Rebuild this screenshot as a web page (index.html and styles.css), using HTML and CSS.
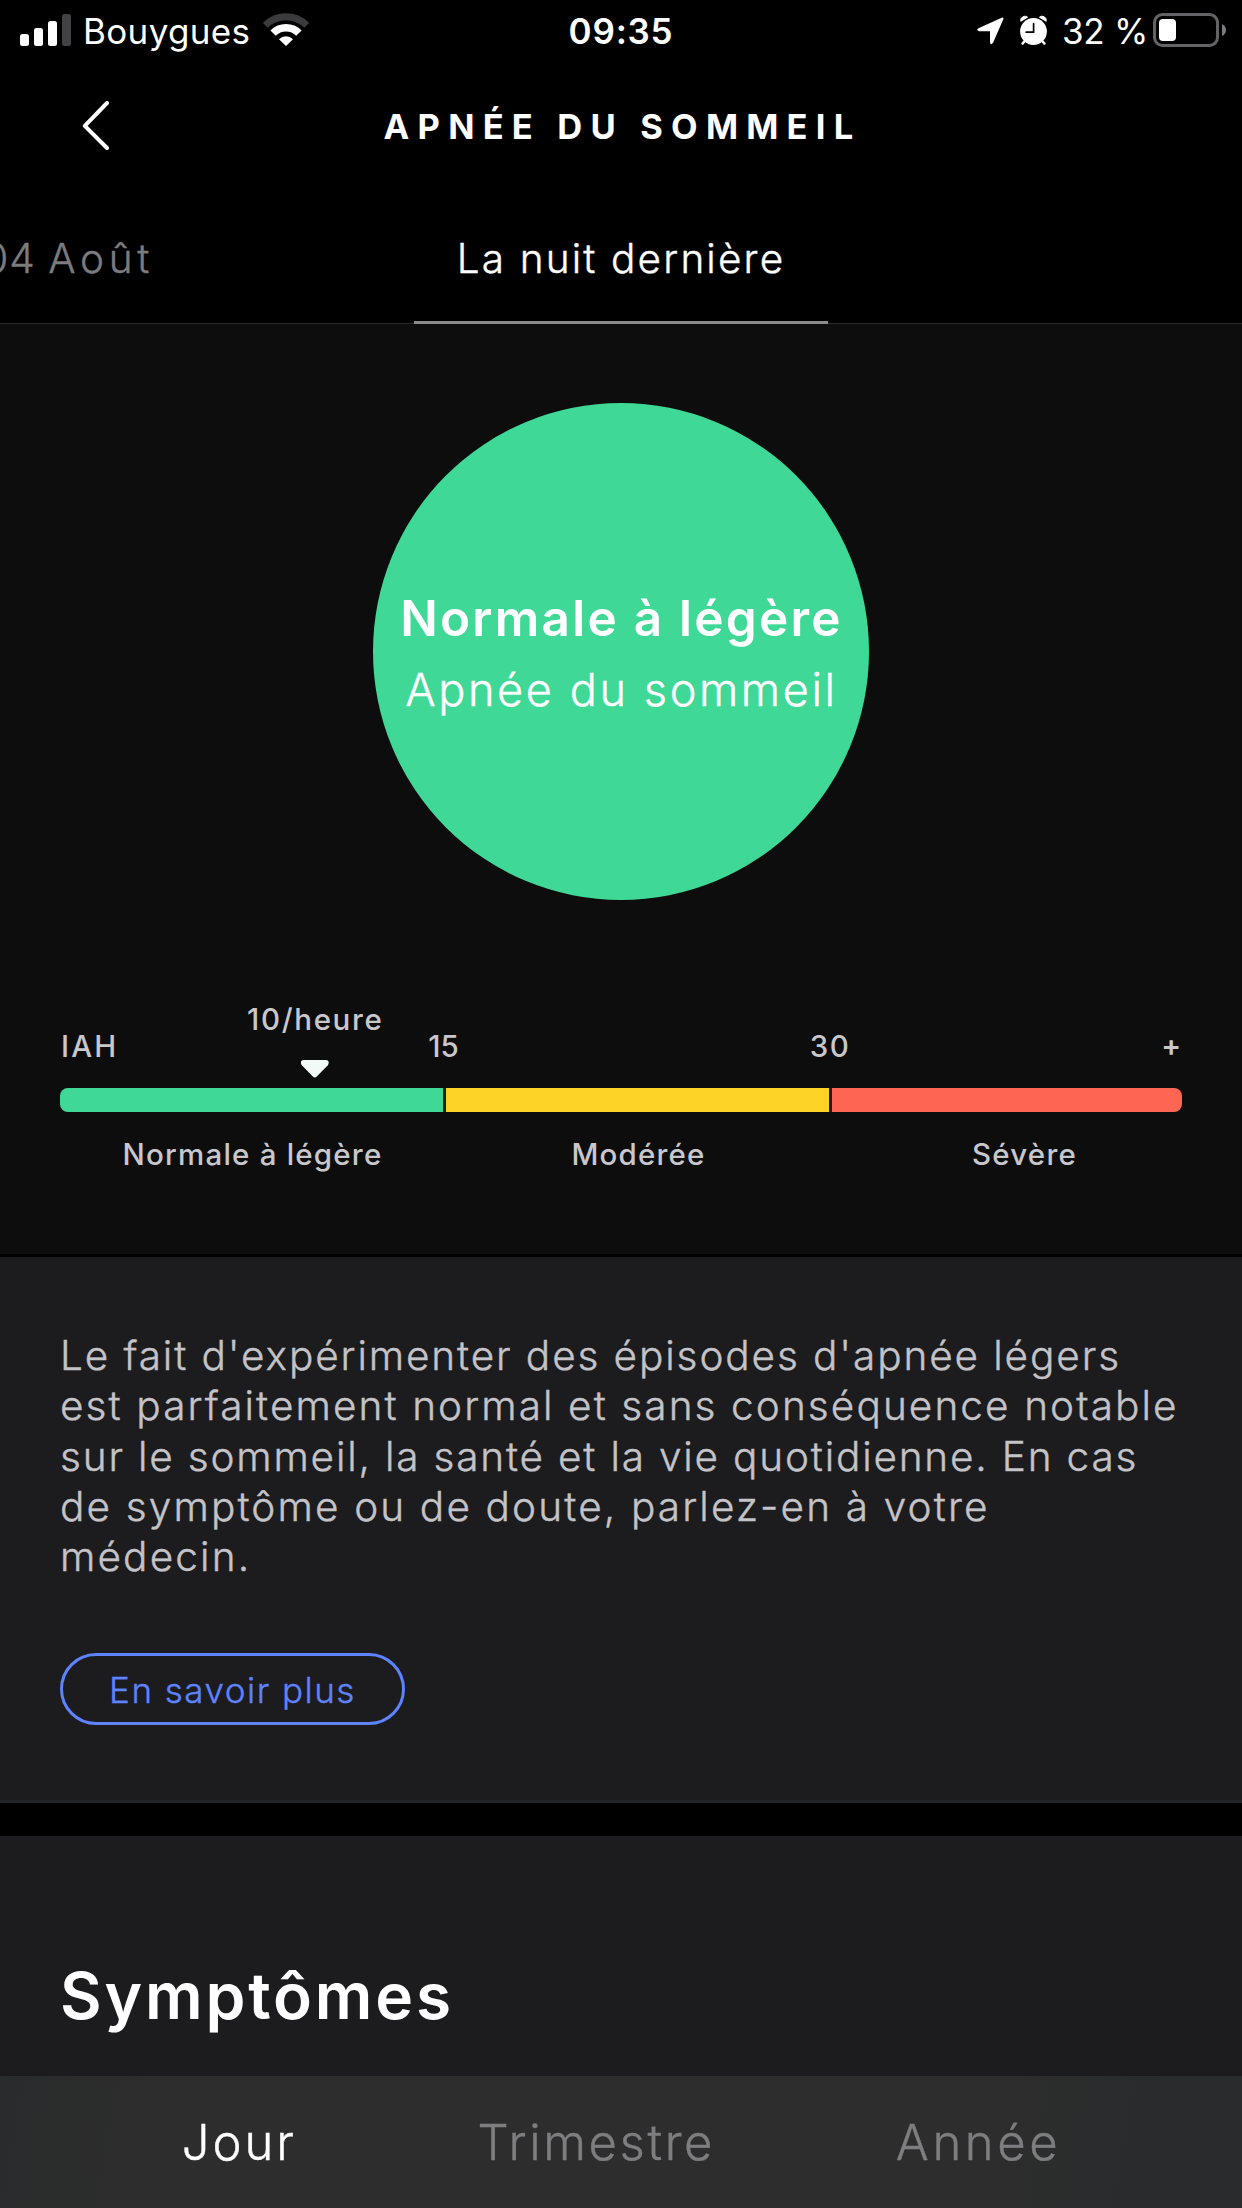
FILE: index.html
```html
<!DOCTYPE html>
<html lang="fr">
<head>
<meta charset="utf-8">
<title>Apnée du sommeil</title>
<link rel="stylesheet" href="styles.css">
</head>
<body>
<div class="screen">
  <div class="status">
    <div class="status-left">
      <svg width="51" height="62" viewBox="20 0 51 62">
        <g fill="#fff">
          <rect x="20" y="34" width="9" height="12" rx="2.5"/>
          <rect x="34" y="28" width="9" height="18" rx="2.5"/>
          <rect x="48" y="21" width="9" height="25" rx="2.5"/>
        </g>
        <rect x="62" y="14" width="9" height="32" rx="2.5" fill="#424244"/>
      </svg>
      <span class="carrier">Bouygues</span>
      <svg width="46" height="62" viewBox="263 0 46 62">
        <path d="M265.3 25.3A29.3 29.3 0 0 1 306.7 25.3" fill="none" stroke="#3b3b3d" stroke-width="6.8"/>
        <path d="M273.1 33.1A18.2 18.2 0 0 1 298.9 33.1" fill="none" stroke="#fff" stroke-width="7.6"/>
        <path d="M286 46L279 39.2A10 10 0 0 1 293 39.2Z" fill="#fff"/>
      </svg>
    </div>
    <span class="clock">09:35</span>
    <div class="status-right">
      <svg width="27" height="62" viewBox="977 0 27 62">
        <path d="M978.5 28.2L1001.7 17.8Q1004 17 1003.3 19.3L993.2 42.6Q990.6 45.8 990 42.4V31.2H979Q975.7 30 978.5 28.2Z" fill="#fff"/>
      </svg>
      <svg width="27" height="62" viewBox="1020 0 27 62" class="alarm">
        <circle cx="1033.5" cy="31.5" r="13.4" fill="#fff"/>
        <path d="M1020.8 21.3A4.2 4.2 0 0 1 1027.6 17.2ZM1046.2 21.3A4.2 4.2 0 0 0 1039.4 17.2Z" fill="#fff" stroke="#fff" stroke-width="1" stroke-linejoin="round"/>
        <path d="M1024.8 41L1022.5 43.6M1042.2 41L1044.5 43.6" stroke="#fff" stroke-width="2.4" stroke-linecap="round"/>
        <path d="M1033.6 23.5V32.2H1026.2" fill="none" stroke="#000" stroke-width="1.7" stroke-linecap="round"/>
      </svg>
      <span class="charge">32 %</span>
      <svg width="73" height="62" viewBox="1153 0 73 62">
        <rect x="1154.5" y="14.5" width="63" height="31" rx="8" fill="none" stroke="#636365" stroke-width="3"/>
        <rect x="1159" y="19" width="17" height="22" rx="4" fill="#fff"/>
        <path d="M1222 24Q1226 26 1226 30T1222 36Z" fill="#7c7c7e"/>
      </svg>
    </div>
  </div>

  <header class="header">
    <svg class="back" width="30" height="52" viewBox="0 0 30 52">
      <path d="M27 2L4.8 24.8L27 47" fill="none" stroke="#fff" stroke-width="4" stroke-linecap="round" stroke-linejoin="round"/>
    </svg>
    <h1 class="title">APNÉE DU SOMMEIL</h1>
  </header>

  <nav class="days">
    <span class="day"><span class="date">04 </span><span class="month">Août</span></span>
    <span class="day day-active">La nuit dernière</span>
  </nav>

  <main class="content">
    <section class="result">
      <div class="disc">
        <strong class="level">Normale à légère</strong>
        <span class="metric">Apnée du sommeil</span>
      </div>
      <div class="gauge">
        <div class="value" style="left: 255.3px">
          <span>10/heure</span>
          <svg width="28" height="18" viewBox="0 0 28 18"><path d="M3 0H25Q28 0 28 2.5Q28 4 27 5.2L16 16.6Q14 18.6 12 16.6L1 5.2Q0 4 0 2.5Q0 0 3 0Z" fill="#f2faf7"/></svg>
        </div>
        <div class="ticks">
          <span class="unit">IAH</span>
          <span class="tick" style="left: 383.5px">15</span>
          <span class="tick tick-30" style="left: 770px">30</span>
          <span class="plus">+</span>
        </div>
        <div class="bar">
          <i class="seg seg-ok"></i><i class="seg seg-mid"></i><i class="seg seg-high"></i>
        </div>
        <div class="zones">
          <span>Normale à légère</span><span>Modérée</span><span>Sévère</span>
        </div>
      </div>
    </section>

    <section class="info">
      <p class="text">
        <span class="l1">Le fait d'expérimenter des épisodes d'apnée légers</span>
        <span class="l2">est parfaitement normal et sans conséquence notable</span>
        <span class="l3">sur le sommeil, la santé et la vie quotidienne. En cas</span>
        <span class="l4">de symptôme ou de doute, parlez-en à votre</span>
        <span class="l4">médecin.</span>
      </p>
      <a class="more">En savoir plus</a>
    </section>

    <section class="symptoms">
      <h2 class="heading">Symptômes</h2>
    </section>
  </main>

  <nav class="periods">
    <span class="period period-active jour">Jour</span>
    <span class="period">Trimestre</span>
    <span class="period annee">Année</span>
  </nav>
</div>
</body>
</html>
```

FILE: styles.css
```css
* { box-sizing: border-box; }
body { margin: 0; background: #000; color: #fff; font-family: Inter, "Open Sans", sans-serif; }
svg { display: block; flex: none; }
.screen { width: 1242px; height: 2208px; display: flex; flex-direction: column; overflow: hidden; white-space: nowrap; }

/* Slightly thickened light weight */
.days, .metric, .text, .more, .periods { font-weight: 300; -webkit-text-stroke: .4px currentColor; }

/* Status bar */
.status { height: 62px; flex: none; display: grid; grid-template-columns: 1fr auto 1fr; line-height: 63px; font-size: 35px; padding: 0 16px 0 20px; }
.status-left, .status-right { display: flex; }
.status-right { justify-content: flex-end; }
.carrier { letter-spacing: .35px; margin: 0 12.5px 0 12px; }
.clock { font-weight: 600; letter-spacing: .77px; margin-right: 4px; }
.alarm { margin: 0 15px 0 16px; }
.charge { letter-spacing: -.27px; margin-right: 5px; }

/* Header */
.header { height: 129px; flex: none; display: grid; grid-template-columns: 1fr auto 1fr; align-items: center; }
.back { margin-left: 80px; }
.title { margin: 0 0 0 3px; font-size: 34.5px; font-weight: 700; letter-spacing: 8.21px; }

/* Day selector */
.days { height: 133px; flex: none; display: flex; border-bottom: 1px solid #2b2a2b; font-size: 40.5px; }
.day { height: 133px; padding-top: 47px; line-height: 41px; color: #7c7c7e; width: 154px; display: flex; justify-content: flex-end; white-space: pre; }
.date { letter-spacing: 1px; }
.month { letter-spacing: 4.69px; }
.day-active { width: 414px; margin-left: 260px; justify-content: center; color: #fff; letter-spacing: 2.16px; border-bottom: 3px solid #8b8b8c; }

/* Result */
.content { flex: 1; min-height: 0; overflow: hidden; }
.result { height: 933px; background: #0d0d0d; border-bottom: 3px solid #000; padding: 79px 60px 0; }
.disc { width: 496px; height: 497px; margin: 0 auto; padding: 5px 0 0 1px; border-radius: 50%; background: #3fd897; display: flex; flex-direction: column; align-items: center; justify-content: center; line-height: 71.5px; }
.level { font-size: 49.5px; font-weight: 600; letter-spacing: 2.25px; }
.metric { font-size: 45px; letter-spacing: 2.62px; }

/* Severity gauge */
.gauge { position: relative; padding-top: 131px; color: #c8c7cc; font-size: 29.5px; font-weight: 500; letter-spacing: 1.2px; line-height: 31px; }
.value { position: absolute; top: 104px; transform: translateX(-50%); display: flex; flex-direction: column; align-items: center; gap: 25px; letter-spacing: 1.65px; }
.ticks { position: relative; display: flex; justify-content: space-between; }
.unit { letter-spacing: 2.1px; padding-left: 1px; }
.tick { position: absolute; transform: translateX(-50%); letter-spacing: 0; }
.tick-30 { letter-spacing: 1.5px; }
.plus { font-size: 29.5px; line-height: 29px; font-weight: 600; letter-spacing: 0; padding-right: 1px; }
.bar { display: flex; gap: 3px; height: 24px; margin-top: 26px; background: #1c1c1e; border-radius: 8px; overflow: hidden; }
.seg { flex: 0 0 383px; }
.seg-ok { background: #3fd897; }
.seg-mid { background: #fdd328; }
.seg-high { background: #ff6553; }
.zones { display: flex; gap: 3px; margin-top: 27px; padding-left: 1px; }
.zones span { flex: 0 0 383px; text-align: center; }

/* Explanation */
.info { height: 546px; padding: 74px 60px 0; background: #1c1c1e; border-bottom: 3px solid #22262a; }
.text { margin: 0 0 70.75px; color: #c4c3c8; font-size: 40.5px; line-height: 50.25px; }
.text span { display: block; }
.l1 { letter-spacing: 1.9px; }
.l2 { letter-spacing: 2.1px; }
.l3 { letter-spacing: 1.82px; }
.l4 { letter-spacing: 2.15px; }
.more { display: flex; align-items: center; justify-content: center; width: 345px; height: 72px; padding-top: 2px; border: 3px solid #5f83ff; border-radius: 36px; color: #5f83ff; font-size: 35px; letter-spacing: 1.48px; }

.symptoms { margin-top: 33px; height: 300px; padding: 128px 60px 0; background: #1c1c1e; }
.heading { margin: 0; font-size: 64px; line-height: 64px; font-weight: 600; letter-spacing: 2.84px; }

/* Period tabs */
.periods { height: 132px; flex: none; display: flex; justify-content: space-evenly; align-items: center; padding-left: 1px; background: linear-gradient(100deg, #2a2b2c 0, #2d2d2d 12%, #2d2d2d 80%, #292b2c 94%); font-size: 49px; letter-spacing: 2.6px; color: #7e7e80; }
.period-active { color: #fff; }
.jour { letter-spacing: 2.95px; }
.annee { letter-spacing: 3.6px; }
```
